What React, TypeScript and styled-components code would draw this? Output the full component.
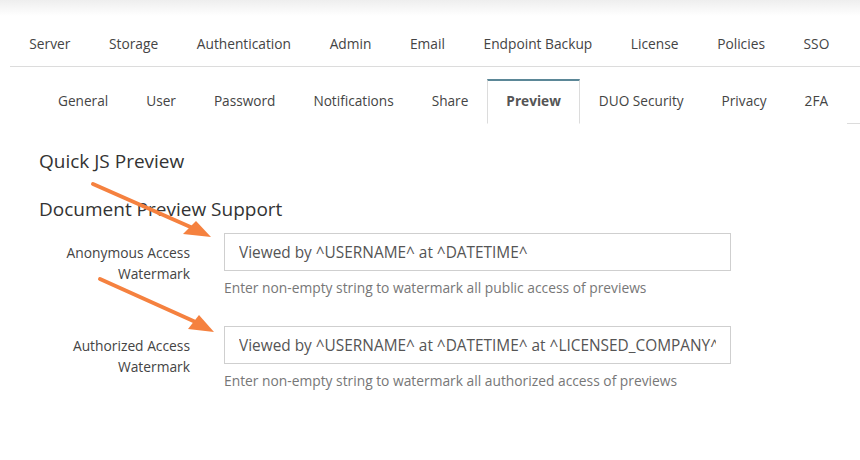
import styled, { createGlobalStyle } from 'styled-components';

const GlobalStyle = createGlobalStyle`
  html, body {
    margin: 0;
    padding: 0;
    background: #fff;
  }
  body {
    font-family: "Open Sans", "Noto Sans", sans-serif;
    color: #444;
  }
`;

const mainTabs = ['Server', 'Storage', 'Authentication', 'Admin', 'Email', 'Endpoint Backup', 'License', 'Policies', 'SSO'];
const subTabs = ['General', 'User', 'Password', 'Notifications', 'Share', 'Preview', 'DUO Security', 'Privacy', '2FA'];

const fields = [
  {
    label: ['Anonymous Access', 'Watermark'],
    value: 'Viewed by ^USERNAME^ at ^DATETIME^',
    help: 'Enter non-empty string to watermark all public access of previews',
  },
  {
    label: ['Authorized Access', 'Watermark'],
    value: 'Viewed by ^USERNAME^ at ^DATETIME^ at ^LICENSED_COMPANY^',
    help: 'Enter non-empty string to watermark all authorized access of previews',
  },
];

export default function App() {
  return (
    <Page>
      <GlobalStyle />
      <MainNav>
        {mainTabs.map((t) => (
          <MainTab key={t}>{t}</MainTab>
        ))}
      </MainNav>

      <SubNav>
        {subTabs.map((t) => (
          <SubTab key={t} $active={t === 'Preview'}>{t}</SubTab>
        ))}
      </SubNav>

      <Content>
        <Heading>Quick JS Preview</Heading>
        <Heading>Document Preview Support</Heading>

        <Form>
          {fields.map((f) => (
            <Row key={f.help}>
              <Label>
                {f.label[0]}
                <br />
                {f.label[1]}
              </Label>
              <Field>
                <TextInput defaultValue={f.value} readOnly />
                <Help>{f.help}</Help>
              </Field>
            </Row>
          ))}
        </Form>
      </Content>

      {/* annotation arrows drawn over the screenshot */}
      <Arrows width="860" height="460" viewBox="0 0 860 460">
        <line x1="93" y1="184" x2="195" y2="229" stroke="#f5813f" strokeWidth="4" strokeLinecap="round" />
        <polygon points="211,237 183,234 196,221" fill="#f5813f" />
        <line x1="100" y1="279" x2="200" y2="324" stroke="#f5813f" strokeWidth="4" strokeLinecap="round" />
        <polygon points="214,332 188,329 199,315" fill="#f5813f" />
      </Arrows>
    </Page>
  );
}

const Page = styled.div`
  position: relative;
  width: 860px;
  height: 460px;
  overflow: hidden;
  background: linear-gradient(to bottom, #eeeeee 0px, #ffffff 16px);
  padding-top: 22px;
  box-sizing: border-box;
`;

const MainNav = styled.nav`
  display: flex;
  margin-left: 10px;
  border-bottom: 1px solid #dcdcdc;
`;

const MainTab = styled.div`
  height: 44px;
  line-height: 44px;
  padding: 0 19.3px;
  font-size: 13.75px;
  color: #444;
  white-space: nowrap;
`;

const SubNav = styled.nav`
  display: flex;
  margin-left: 39px;
  margin-top: 12px;
  border-bottom: 1px solid #dcdcdc;
`;

const SubTab = styled.div<{ $active?: boolean }>`
  height: 45px;
  line-height: 40px;
  padding: 0 18px;
  font-size: 13.65px;
  color: ${(p) => (p.$active ? '#555' : '#444')};
  font-weight: ${(p) => (p.$active ? 700 : 400)};
  white-space: nowrap;
  box-sizing: border-box;
  margin-bottom: -1px;
  border: 1px solid ${(p) => (p.$active ? '#dcdcdc' : 'transparent')};
  border-top: 2px solid ${(p) => (p.$active ? '#5b8797' : 'transparent')};
  border-bottom: 1px solid ${(p) => (p.$active ? '#fff' : 'transparent')};
  background: #fff;
`;

const Content = styled.div`
  padding: 24px 0 0 39px;
`;

const Heading = styled.h2`
  margin: 0 0 22px;
  font-size: 19px;
  font-weight: 400;
  line-height: 26px;
  color: #333;
`;

const Form = styled.div`
  display: flex;
  flex-direction: column;
  gap: 28px;
  margin-top: -11px;
`;

const Row = styled.div`
  display: grid;
  grid-template-columns: 151px 507px;
  column-gap: 34px;
`;

const Label = styled.div`
  text-align: right;
  font-size: 13.8px;
  line-height: 21px;
  color: #444;
  padding-top: 9px;
`;

const Field = styled.div`
  display: flex;
  flex-direction: column;
`;

const TextInput = styled.input`
  height: 38px;
  box-sizing: border-box;
  border: 1px solid #cfcfcf;
  padding: 0 14px;
  font-family: "Open Sans", "Noto Sans", sans-serif;
  font-size: 15.4px;
  color: #555;
  outline: none;
  background: #fff;
`;

const Help = styled.div`
  margin-top: 7px;
  font-size: 13.8px;
  line-height: 20px;
  color: #777;
`;

const Arrows = styled.svg`
  position: absolute;
  left: 0;
  top: 0;
  pointer-events: none;
`;
